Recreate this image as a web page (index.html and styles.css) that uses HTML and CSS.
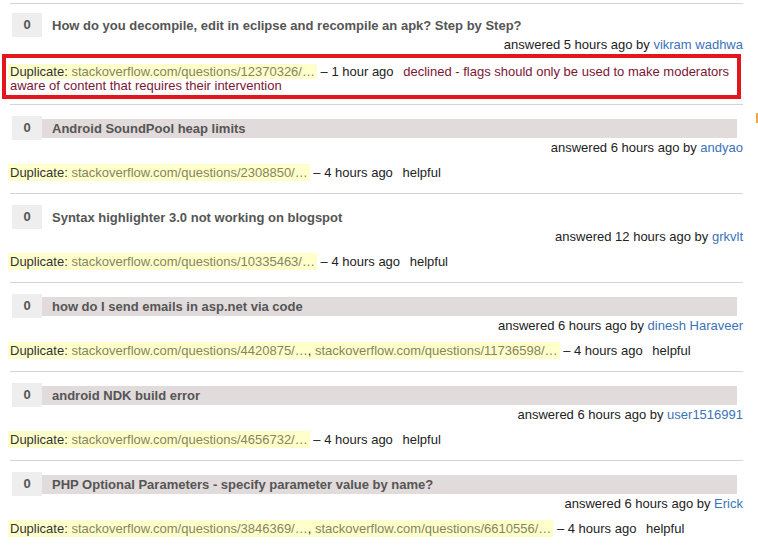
FILE: index.html
```html
<!DOCTYPE html>
<html lang="en">
<head>
    <meta charset="UTF-8">
    <title>Flagged posts</title>
    <link rel="stylesheet" href="styles.css">
</head>
<body>
    <div class="flag-list">
        <div class="flag-row first">
            <div class="question">
                <span class="votes">0</span>
                <a class="title plain" href="#">How do you decompile, edit in eclipse and recompile an apk? Step by Step?</a>
            </div>
            <div class="answered">answered 5 hours ago by <a href="#">vikram wadhwa</a></div>
            <div class="flag-box">
                <span class="dup">Duplicate: <a href="#">stackoverflow.com/questions/12370326/…</a></span> – 1 hour ago <span class="declined">declined - flags should only be used to make moderators</span><br>
                <span class="declined wrap">aware of content that requires their intervention</span>
            </div>
        </div>

        <div class="flag-row">
            <div class="question">
                <span class="votes">0</span>
                <a class="title" href="#">Android SoundPool heap limits</a>
            </div>
            <div class="answered">answered 6 hours ago by <a href="#">andyao</a></div>
            <div class="flag-info">
                <span class="dup">Duplicate: <a href="#">stackoverflow.com/questions/2308850/…</a></span> – 4 hours ago <span class="outcome">helpful</span>
            </div>
        </div>

        <div class="flag-row">
            <div class="question">
                <span class="votes">0</span>
                <a class="title plain" href="#">Syntax highlighter 3.0 not working on blogspot</a>
            </div>
            <div class="answered">answered 12 hours ago by <a href="#">grkvlt</a></div>
            <div class="flag-info">
                <span class="dup">Duplicate: <a href="#">stackoverflow.com/questions/10335463/…</a></span> – 4 hours ago <span class="outcome">helpful</span>
            </div>
        </div>

        <div class="flag-row">
            <div class="question">
                <span class="votes">0</span>
                <a class="title" href="#">how do I send emails in asp.net via code</a>
            </div>
            <div class="answered">answered 6 hours ago by <a href="#">dinesh Haraveer</a></div>
            <div class="flag-info">
                <span class="dup">Duplicate: <a href="#">stackoverflow.com/questions/4420875/…</a>, <a href="#">stackoverflow.com/questions/11736598/…</a></span> – 4 hours ago <span class="outcome">helpful</span>
            </div>
        </div>

        <div class="flag-row">
            <div class="question">
                <span class="votes">0</span>
                <a class="title" href="#">android NDK build error</a>
            </div>
            <div class="answered">answered 6 hours ago by <a href="#">user1516991</a></div>
            <div class="flag-info">
                <span class="dup">Duplicate: <a href="#">stackoverflow.com/questions/4656732/…</a></span> – 4 hours ago <span class="outcome">helpful</span>
            </div>
        </div>

        <div class="flag-row">
            <div class="question">
                <span class="votes">0</span>
                <a class="title" href="#">PHP Optional Parameters - specify parameter value by name?</a>
            </div>
            <div class="answered">answered 6 hours ago by <a href="#">Erick</a></div>
            <div class="flag-info">
                <span class="dup">Duplicate: <a href="#">stackoverflow.com/questions/3846369/…</a>, <a href="#">stackoverflow.com/questions/6610556/…</a></span> – 4 hours ago <span class="outcome">helpful</span>
            </div>
        </div>
    </div>

    <!-- bit of the sidebar peeking in at the right edge -->
    <div class="edge-mark"></div>
</body>
</html>
```

FILE: styles.css
```css
* {
    margin: 0;
    padding: 0;
    box-sizing: border-box;
}

body {
    font-family: "Liberation Sans", Arial, sans-serif;
    font-size: 13px;
    color: #222;
    background: #fff;
    overflow: hidden;
}

a {
    text-decoration: none;
}

.flag-list {
    margin-left: 10px;
    width: 733px;
    padding-top: 3px;
}

.flag-row {
    border-top: 1px solid #d4d4d4;
    padding: 11px 0 13px;
}

.flag-row.first {
    padding-top: 9px;
    padding-bottom: 5px;
}

/* Question line */
.question {
    display: flex;
    align-items: center;
    height: 24px;
    margin-left: 2px;
}

.votes {
    width: 30px;
    height: 24px;
    line-height: 24px;
    text-align: center;
    background: #eeeeee;
    color: #555;
    font-weight: bold;
}

.title {
    flex: 1;
    margin-right: 6px;
    height: 19px;
    line-height: 19px;
    padding-left: 10px;
    background: #e1dbdb;
    color: #555;
    font-weight: bold;
}

.title.plain {
    background: none;
}

.answered {
    text-align: right;
    line-height: 15px;
}

.answered a {
    color: #3b73b9;
}

/* Flag line */
.flag-info {
    line-height: 15px;
    margin-top: 10px;
}

.dup {
    background: #ffffcc;
    padding: 1px 2px;
    margin-left: -2px;
    color: #333;
}

.dup a {
    color: #85855f;
}

.outcome {
    margin-left: 6px;
}

.declined {
    color: #7b1635;
    margin-left: 6px;
}

.declined.wrap {
    margin-left: 0;
}

/* Highlighted flag */
.flag-box {
    border: 4px solid #e3161e;
    margin: 2px 2px 0 -8px;
    padding: 7px 4px 2px;
    line-height: 14px;
}

.flag-box .dup {
    padding: 0 2px;
}

.edge-mark {
    position: absolute;
    top: 113px;
    right: 0;
    width: 2px;
    height: 10px;
    background: #f3a447;
}
```
